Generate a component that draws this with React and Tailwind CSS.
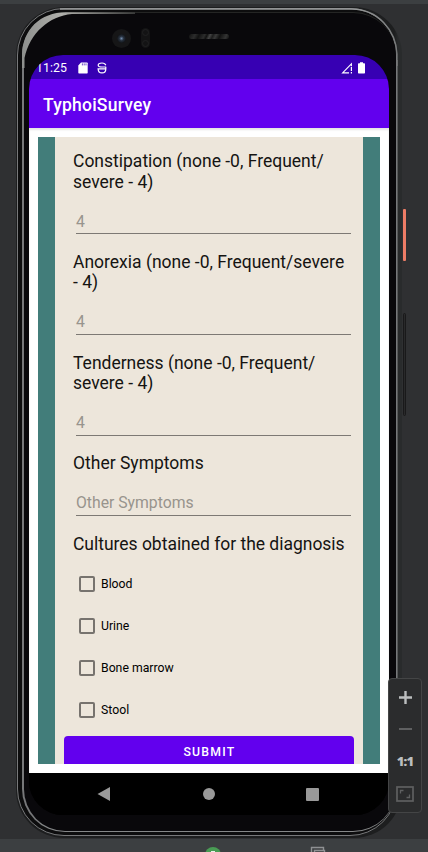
import React from "react";

const questions = [
  { lines: ["Constipation (none -0, Frequent/", "severe - 4)"], hint: "4" },
  { lines: ["Anorexia (none -0, Frequent/severe", "- 4)"], hint: "4" },
  { lines: ["Tenderness (none -0, Frequent/", "severe - 4)"], hint: "4" },
  { lines: ["Other Symptoms"], hint: "Other Symptoms" },
];

const cultures = ["Blood", "Urine", "Bone marrow", "Stool"];

function StatusBar() {
  return (
    <div className="flex h-6 shrink-0 items-center bg-[#3700b3] pl-[7px] pr-6 pt-[2px] text-white">
      <span className="w-[41px] text-[12.3px] leading-none tracking-[0.1px]">11:25</span>
      <svg className="ml-px" width="10" height="12" viewBox="0 0 10 12">
        <path d="M3 0.5h6a0.7 0.7 0 0 1 .7.7v9.6a.7.7 0 0 1-.7.7H1a.7.7 0 0 1-.7-.7V3.4z" fill="#fff" />
        <path d="M4.4 1.4v2M6.2 1.4v2M8 1.4v2" stroke="#3700b3" strokeWidth="0.7" />
      </svg>
      <svg className="ml-[9px]" width="10" height="12" viewBox="0 0 10 12" fill="none" stroke="#fff" strokeWidth="1.2">
        <path d="M8.8 3.2C8.3 1.6 6.8 1 5 1S1.2 1.7 1.2 3.2 2.4 5 5 5h4.2M.5 6.9H9M1.2 6.9c0 2.4 1.5 4 3.8 4s3.8-1.6 3.8-4V5" />
      </svg>
      <div className="grow" />
      <svg width="12" height="12" viewBox="0 0 12 12">
        <path d="M8 10.9H1.6L10.4 1.8v2.4" fill="none" stroke="#fff" strokeWidth="1.1" />
        <path d="M10.4 5v4M10.4 10v1.4" stroke="#fff" strokeWidth="1.2" />
      </svg>
      <svg className="ml-[5px]" width="7" height="12" viewBox="0 0 7 12">
        <path d="M2 .3h3v1h1.3a.7.7 0 0 1 .7.7v8.8a.7.7 0 0 1-.7.7H.7a.7.7 0 0 1-.7-.7V2a.7.7 0 0 1 .7-.7H2z" fill="#fff" />
      </svg>
    </div>
  );
}

function Question({ lines, hint }) {
  return (
    <div className="mb-[17.75px]">
      <div className="pl-[18px] text-[17.5px] leading-[20.5px] text-[#151412]">
        {lines.map((line) => (
          <div key={line} className="whitespace-nowrap">{line}</div>
        ))}
      </div>
      <div className="ml-[21px] mr-3 mt-[19px] flex h-[23px] items-center border-b border-[#7d7974] pb-px text-[15.75px] leading-none text-[#98948d]">
        {hint}
      </div>
    </div>
  );
}

function Screen() {
  return (
    <div className="flex h-[760px] w-[360px] flex-col overflow-hidden rounded-[34px] bg-black">
      <StatusBar />
      <header className="flex h-[49px] shrink-0 items-center bg-[#6200ee] pl-[14px] pt-[3px] text-[17.5px] font-medium tracking-[0.22px] text-white">
        TyphoiSurvey
      </header>
      <main className="h-[645px] shrink-0 bg-white p-[9px] shadow-[inset_0_2px_2px_#e4e4e4]">
        <div className="h-[627px] overflow-hidden border-x-[17px] border-[#427d7a] bg-[#ede6db] pt-[14px]">
          {questions.map((q) => (
            <Question key={q.lines[0]} {...q} />
          ))}
          <div className="whitespace-nowrap pl-[18px] text-[17.5px] leading-[20.5px] tracking-[-0.02px] text-[#151412]">
            Cultures obtained for the diagnosis
          </div>
          <div className="mt-[9px] flex flex-col">
            {cultures.map((name) => (
              <label key={name} className="flex h-[42px] items-center pl-6 text-[12.25px] text-black">
                <span className="mr-[6px] size-4 rounded-[2px] border-2 border-[#77736e]" />
                <span className="pt-px">{name}</span>
              </label>
            ))}
          </div>
          <button className="mx-[9px] mt-[5px] flex h-[32px] w-[290px] items-center justify-center rounded-[4px] bg-[#6200ee] pl-px pt-px text-[12.25px] font-medium tracking-[1.25px] text-white">
            SUBMIT
          </button>
        </div>
      </main>
      <nav className="flex grow items-center bg-black pl-[68px]">
        <svg width="13" height="14" viewBox="0 0 13 14"><path d="M13 0v14L.5 7z" fill="#999" /></svg>
        <span className="ml-[93px] size-3 rounded-full bg-[#999]" />
        <span className="ml-[91px] size-[13px] rounded-[1px] bg-[#999]" />
      </nav>
    </div>
  );
}

function Toolbar() {
  return (
    <div className="absolute left-[388px] top-[678px] flex h-[135px] w-[34px] flex-col items-center rounded-[4px] border border-[#444546] bg-[#2b2c2d]">
      <svg className="mt-3" width="13" height="13" viewBox="0 0 13 13"><path d="M6.5 0v13M0 6.5h13" stroke="#bcbebf" strokeWidth="2.4" /></svg>
      <span className="mt-[24px] h-[2px] w-[13px] bg-[#5f6061]" />
      <span className="mt-[23px] font-['Open_Sans'] text-[13px] font-extrabold leading-4 tracking-[-0.9px] text-[#bcbebf]">1:1</span>
      <svg className="mt-[17px]" width="18" height="16" viewBox="0 0 18 16" fill="none" stroke="#5f6061">
        <rect x="1" y="1" width="16" height="14" strokeWidth="1.7" />
        <path d="M4.5 7.5v-3h3M13.5 8.5v3h-3" strokeWidth="1.3" />
      </svg>
    </div>
  );
}

function BezelHighlights() {
  return (
    <svg className="pointer-events-none absolute left-0 top-0" width="428" height="852" viewBox="0 0 428 852" fill="none">
      <defs>
        <linearGradient id="topGlow" x1="22" y1="0" x2="135" y2="0" gradientUnits="userSpaceOnUse">
          <stop offset="0" stopColor="#8d8f8d" />
          <stop offset="0.35" stopColor="#b0b0ac" />
          <stop offset="1" stopColor="#3a3b3a" />
        </linearGradient>
        <linearGradient id="rightGlow" x1="350" y1="0" x2="398" y2="0" gradientUnits="userSpaceOnUse">
          <stop offset="0" stopColor="#9a9c9c" />
          <stop offset="1" stopColor="#77797a" />
        </linearGradient>
      </defs>
      <path d="M22 68V54C23 30 40 12.3 66 12.3H135V14H72C49 16 30 33 24.5 58V68z" fill="url(#topGlow)" />
      <path d="M60 9H352C378 9.5 396 30 397 54V66" stroke="url(#rightGlow)" strokeWidth="1.3" />
      <path d="M397 60V680" stroke="#77797a" strokeWidth="1.2" />
    </svg>
  );
}

export default function App() {
  return (
    <div className="relative h-[852px] w-[428px] overflow-hidden bg-[#2f3032] font-['Roboto']">
      <div className="h-1 bg-[#3c3f41]" />
      <div className="ml-4 mt-[3px] h-[831px] w-[386px] rounded-[48px] bg-[#1f2021] bg-[linear-gradient(90deg,#1d1e1f_98%,#292b2c_99%)] pl-px pr-[5px] pt-px pb-[2px]">
        <div className="h-full rounded-[47px] border border-[#77787a] bg-[#0d0d0e] pl-1 pr-0 pt-[3px] pb-[3px]">
          <div className="h-full rounded-[43px] border-b border-l-2 border-t border-b-[#858788] border-l-[#77787a] border-t-[#242524] bg-[#09080b] pl-[5px]">
            <div className="flex h-[42px] items-center pl-[83px] pt-2">
              <span className="flex size-[19px] items-center justify-center rounded-full bg-[#161617]">
                <span className="size-[9px] rounded-full bg-[radial-gradient(circle,#718aab_0%,#26303d_35%,#101113_75%)]" />
              </span>
              <span className="ml-[10px] flex h-[20px] w-[9px] flex-col justify-between rounded-full bg-[#131314] p-px">
                <span className="size-[7px] rounded-full border border-[#202021]" />
                <span className="size-[7px] rounded-full border border-[#202021]" />
              </span>
              <span className="ml-[39px] mb-[3px] h-[5px] w-[40px] rounded-full bg-[linear-gradient(115deg,#111_0%,#2c2c2c_15%,#111_25%,#2c2c2c_38%,#111_44%,#444_51%,#1c1c1c_58%,#383838_65%,#111_75%,#333_90%,#111_100%)]" />
            </div>
            <Screen />
          </div>
        </div>
      </div>
      <div className="mt-[1px] h-[13px] bg-[#3c3f41]" />
      <BezelHighlights />
      <span className="absolute left-[403px] top-[209px] h-[52px] w-[3px] rounded-[1px] bg-[#ed7c66]" />
      <span className="absolute left-[403px] top-[313px] h-[103px] w-[3px] rounded-full border border-[#19191a] bg-[#29292a]" />
      <span className="absolute left-[205px] top-[847px] size-4 rounded-full bg-[#499c54]" />
      <span className="absolute left-[211px] top-[851px] h-px w-1 bg-[#e8f3e9]" />
      <svg className="absolute left-[310px] top-[846px]" width="17" height="14" viewBox="0 0 17 14" fill="none" stroke="#8f9193" strokeWidth="1.4">
        <path d="M1.5 11V1.5h12V4M4.5 14V4.5h10V14" />
      </svg>
      <Toolbar />
    </div>
  );
}
